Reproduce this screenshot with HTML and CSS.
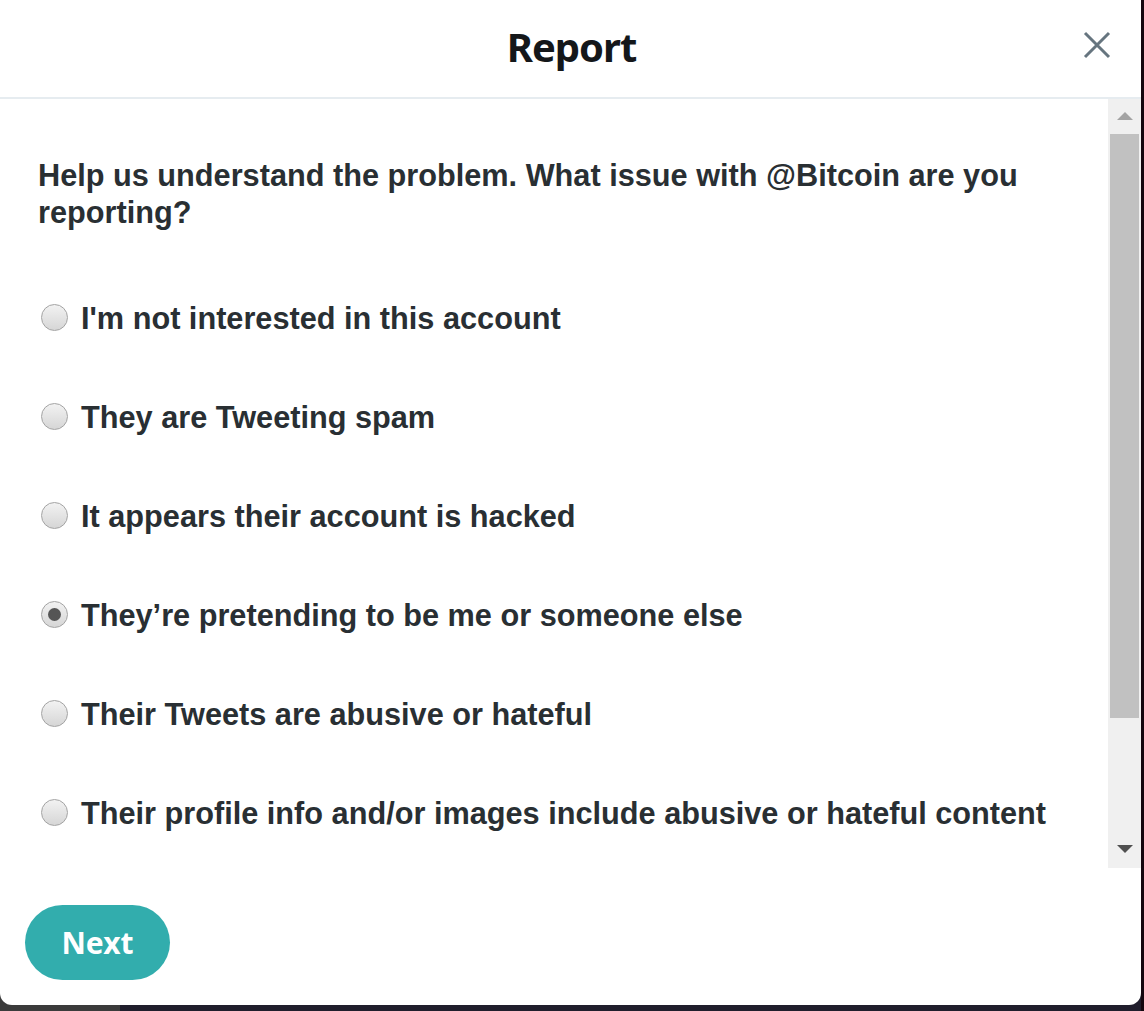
FILE: index.html
```html
<!DOCTYPE html>
<html>
<head>
<meta charset="utf-8">
<link rel="stylesheet" href="styles.css">
</head>
<body>
<div class="screen">
  <div class="dialog">
    <header class="dialog-header">
      <h1 class="title">Report</h1>
      <button class="close" aria-label="Close">
        <svg width="28" height="28" viewBox="0 0 28 28"><path d="M2 2 L26 26 M26 2 L2 26" stroke="#66757f" stroke-width="3" fill="none"/></svg>
      </button>
    </header>
    <div class="scroll-area">
      <div class="content">
        <p class="question">Help us understand the problem. What issue with @Bitcoin are you reporting?</p>
        <ul class="options">
          <li class="option"><span class="radio"></span><span class="label">I'm not interested in this account</span></li>
          <li class="option"><span class="radio"></span><span class="label">They are Tweeting spam</span></li>
          <li class="option"><span class="radio"></span><span class="label">It appears their account is hacked</span></li>
          <li class="option"><span class="radio checked"></span><span class="label">They’re pretending to be me or someone else</span></li>
          <li class="option"><span class="radio"></span><span class="label">Their Tweets are abusive or hateful</span></li>
          <li class="option"><span class="radio"></span><span class="label">Their profile info and/or images include abusive or hateful content</span></li>
        </ul>
      </div>
      <div class="scrollbar">
        <div class="arrow up"></div>
        <div class="thumb"></div>
        <div class="track-rest"></div>
        <div class="arrow down"></div>
      </div>
    </div>
    <footer class="dialog-footer">
      <button class="next">Next</button>
    </footer>
  </div>
</div>
</body>
</html>
```
FILE: styles.css
```css
html, body {
  margin: 0;
  padding: 0;
}
body {
  width: 1144px;
  height: 1011px;
  overflow: hidden;
  background: #201e2c;
}
.screen {
  width: 1144px;
  height: 1011px;
  background: linear-gradient(to right, #3b3b3b 0, #3b3b3b 120px, #201e2c 120px);
  position: relative;
}
.screen::after {
  content: "";
  position: absolute;
  right: 0;
  top: 0;
  width: 3px;
  height: 1011px;
  background: #14060e;
}
.dialog {
  width: 1141px;
  height: 1005px;
  background: #fff;
  border-radius: 0 0 12px 12px;
  display: flex;
  flex-direction: column;
  overflow: hidden;
}
.dialog-header {
  height: 97px;
  flex: none;
  border-bottom: 2px solid #e6ecf0;
  display: flex;
  align-items: center;
  justify-content: center;
  position: relative;
}
.title {
  margin: 0 0 4px;
  font-family: "Noto Sans", "Open Sans", sans-serif;
  font-weight: 700;
  font-size: 40px;
  color: #14171a;
  letter-spacing: -1px;
  transform: translateX(1px);
}
.close {
  position: absolute;
  right: 30px;
  top: 31px;
  background: none;
  border: 0;
  padding: 0;
  width: 28px;
  height: 28px;
}
.close svg { display: block; }
.scroll-area {
  height: 769px;
  flex: none;
  display: flex;
  overflow: hidden;
}
.content {
  flex: 1;
  padding: 58px 0 0 38px;
  font-family: "Liberation Sans", Arial, sans-serif;
  font-weight: 700;
  color: #292f33;
}
.question {
  margin: 0;
  font-size: 30.7px;
  line-height: 37px;
  width: 1010px;
}
.options {
  list-style: none;
  margin: 82px 0 0;
  padding: 0;
}
.option {
  display: flex;
  align-items: center;
  height: 99px;
  margin-top: -30px;
  margin-bottom: 30px;
  font-size: 30.7px;
}
.option:first-child { margin-top: -44px; }
.radio {
  width: 25px;
  height: 25px;
  border-radius: 50%;
  border: 1px solid #a3a3a3;
  background: linear-gradient(#f2f2f2, #d6d6d6);
  margin: -3px 13px 0 3px;
  flex: none;
  display: flex;
  align-items: center;
  justify-content: center;
}
.radio.checked::before {
  content: "";
  width: 13px;
  height: 13px;
  border-radius: 50%;
  background: #555;
}
.scrollbar {
  width: 33px;
  flex: none;
  background: #f0f0f0;
  display: flex;
  flex-direction: column;
}
.arrow {
  height: 35px;
  flex: none;
  position: relative;
}
.arrow::before {
  content: "";
  position: absolute;
  left: 9px;
  border-left: 8px solid transparent;
  border-right: 8px solid transparent;
}
.arrow.up::before {
  top: 13px;
  border-bottom: 8px solid #a3a3a3;
}
.arrow.down::before {
  top: 12px;
  border-top: 8px solid #505050;
}
.thumb {
  height: 584px;
  flex: none;
  margin: 0 2px 0 2px;
  background: #c1c1c1;
}
.track-rest { flex: 1; }
.dialog-footer {
  flex: 1;
  padding: 37px 0 0 25px;
}
.next {
  width: 145px;
  height: 75px;
  border: 0;
  border-radius: 38px;
  background: #32adad;
  color: #fff;
  font-family: "Noto Sans", "Open Sans", sans-serif;
  font-weight: 700;
  font-size: 30px;
  padding: 0;
}
```
